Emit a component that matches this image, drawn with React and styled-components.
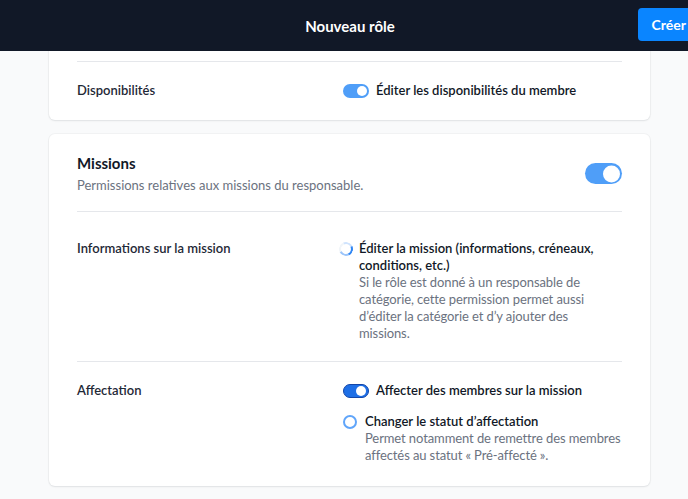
import React from 'react';
import styled, { createGlobalStyle } from 'styled-components';

const GlobalStyle = createGlobalStyle`
  html, body {
    margin: 0;
    padding: 0;
    background: #f9fafb;
    overflow: hidden;
    font-family: Lato, "Noto Sans", sans-serif;
    -webkit-font-smoothing: antialiased;
  }
`;

const Page = styled.div`
  height: 100vh;
  display: flex;
  flex-direction: column;
  overflow: hidden;
`;

const Header = styled.header`
  position: relative;
  z-index: 2;
  flex: none;
  width: 700px;
  height: 51px;
  background: #111827;
  display: grid;
  grid-template-columns: 1fr auto 1fr;
  align-items: center;
`;

const HeaderTitle = styled.h1`
  grid-column: 2;
  margin: 0;
  color: #fff;
  font-size: 15px;
  font-weight: 700;
`;

const CreateButton = styled.button`
  grid-column: 3;
  justify-self: end;
  height: 33px;
  margin-top: -2px;
  padding: 0 14px;
  border: 0;
  border-radius: 4px;
  background: #0a85ff;
  color: #fff;
  font-family: inherit;
  font-size: 14px;
  font-weight: 700;
`;

const Main = styled.main`
  flex: 1;
  padding: 0 38px 0 49px;
  display: flex;
  flex-direction: column;
  gap: 14px;
`;

const Card = styled.section`
  background: #fff;
  border-radius: 6px;
  box-shadow: 0 1px 2px rgba(17, 24, 39, 0.08), 0 0 0 1px rgba(17, 24, 39, 0.03);
  padding: 0 28px;
  margin-top: ${({ $clipped }) => ($clipped ? '-60px' : '0')};
`;

const CardHead = styled.div`
  display: flex;
  align-items: center;
  justify-content: space-between;
  padding: 19px 0 17px;
`;

const CardTitle = styled.h2`
  margin: 0 0 4px;
  font-size: 15px;
  font-weight: 700;
  color: #111827;
  line-height: 20px;
`;

const CardSubtitle = styled.p`
  margin: 0;
  font-size: 13px;
  color: #6b7280;
  line-height: 17px;
`;

const Row = styled.div`
  display: grid;
  grid-template-columns: 266px 1fr;
  border-top: ${({ $first }) => ($first ? '0' : '1px solid #e5e7eb')};
  padding: ${({ $pad }) => $pad || '20px 0'};
  min-height: ${({ $first }) => ($first ? '30px' : '0')};
`;

const RowLabel = styled.div`
  font-size: 13px;
  font-weight: 600;
  color: #1f2937;
  line-height: 17px;
`;

const Options = styled.div`
  display: flex;
  flex-direction: column;
  gap: 14px;
`;

const Option = styled.div`
  display: flex;
  align-items: flex-start;
  gap: ${({ $gap }) => $gap || '7px'};
`;

const OptionText = styled.div`
  display: flex;
  flex-direction: column;
  max-width: ${({ $max }) => $max || 'none'};
  font-size: 13px;
  line-height: 17px;
`;

const OptionTitle = styled.span`
  font-weight: 600;
  color: #111827;
`;

const OptionDesc = styled.span`
  color: #6b7280;
  letter-spacing: -0.1px;
`;

const Switch = styled.span`
  flex: none;
  position: relative;
  box-sizing: border-box;
  width: ${({ $size }) => ($size === 'lg' ? '37px' : '26px')};
  height: ${({ $size }) => ($size === 'lg' ? '21px' : '14px')};
  margin-top: ${({ $size }) => ($size === 'lg' ? '0' : '1.5px')};
  border-radius: 999px;
  background: ${({ $dark }) => ($dark ? '#1e6fe6' : '#4f9ef8')};
  border: ${({ $dark }) => ($dark ? '1.5px solid #1346a8' : '0')};

  &::after {
    content: '';
    position: absolute;
    top: 50%;
    right: 2px;
    transform: translateY(-50%);
    width: ${({ $size }) => ($size === 'lg' ? '17px' : '10px')};
    height: ${({ $size }) => ($size === 'lg' ? '17px' : '10px')};
    border-radius: 50%;
    background: #fff;
  }
`;

const Spinner = styled.span`
  flex: none;
  box-sizing: border-box;
  width: 14px;
  height: 14px;
  margin-top: 1.5px;
  margin-left: -4px;
  border-radius: 50%;
  border: 2.5px solid #f1f5f9;
  border-right-color: #2f86f4;
  border-top-color: #cfe3fd;
  border-bottom-color: #9cc5fa;
  transform: rotate(20deg);
`;

const Ring = styled.span`
  flex: none;
  box-sizing: border-box;
  width: 14px;
  height: 14px;
  margin-top: 2px;
  border-radius: 50%;
  border: 2px solid #60a5fa;
  background: #fff;
`;

export default function App() {
  return (
    <>
      <GlobalStyle />
      <Page>
        <Header>
          <HeaderTitle>Nouveau rôle</HeaderTitle>
          <CreateButton>Créer</CreateButton>
        </Header>
        <Main>
          <Card $clipped>
            <Row $first $pad="19px 0 21px" />
            <Row $pad="20px 0 21px">
              <RowLabel>Disponibilités</RowLabel>
              <Option>
                <Switch />
                <OptionText>
                  <OptionTitle>Éditer les disponibilités du membre</OptionTitle>
                </OptionText>
              </Option>
            </Row>
          </Card>

          <Card>
            <CardHead>
              <div>
                <CardTitle>Missions</CardTitle>
                <CardSubtitle>Permissions relatives aux missions du responsable.</CardSubtitle>
              </div>
              <Switch $size="lg" />
            </CardHead>
            <Row $pad="28px 0 19px">
              <RowLabel>Informations sur la mission</RowLabel>
              <Option $gap="6px">
                <Spinner />
                <OptionText $max="250px">
                  <OptionTitle>Éditer la mission (informations, créneaux, conditions, etc.)</OptionTitle>
                  <OptionDesc>
                    Si le rôle est donné à un responsable de catégorie, cette permission permet aussi
                    d’éditer la catégorie et d’y ajouter des missions.
                  </OptionDesc>
                </OptionText>
              </Option>
            </Row>
            <Row $pad="20px 0 22px">
              <RowLabel>Affectation</RowLabel>
              <Options>
                <Option>
                  <Switch $dark />
                  <OptionText>
                    <OptionTitle>Affecter des membres sur la mission</OptionTitle>
                  </OptionText>
                </Option>
                <Option $gap="8px">
                  <Ring />
                  <OptionText>
                    <OptionTitle>Changer le statut d’affectation</OptionTitle>
                    <OptionDesc>
                      Permet notamment de remettre des membres affectés au statut «&#8239;Pré-affecté&#8239;».
                    </OptionDesc>
                  </OptionText>
                </Option>
              </Options>
            </Row>
          </Card>
        </Main>
      </Page>
    </>
  );
}
